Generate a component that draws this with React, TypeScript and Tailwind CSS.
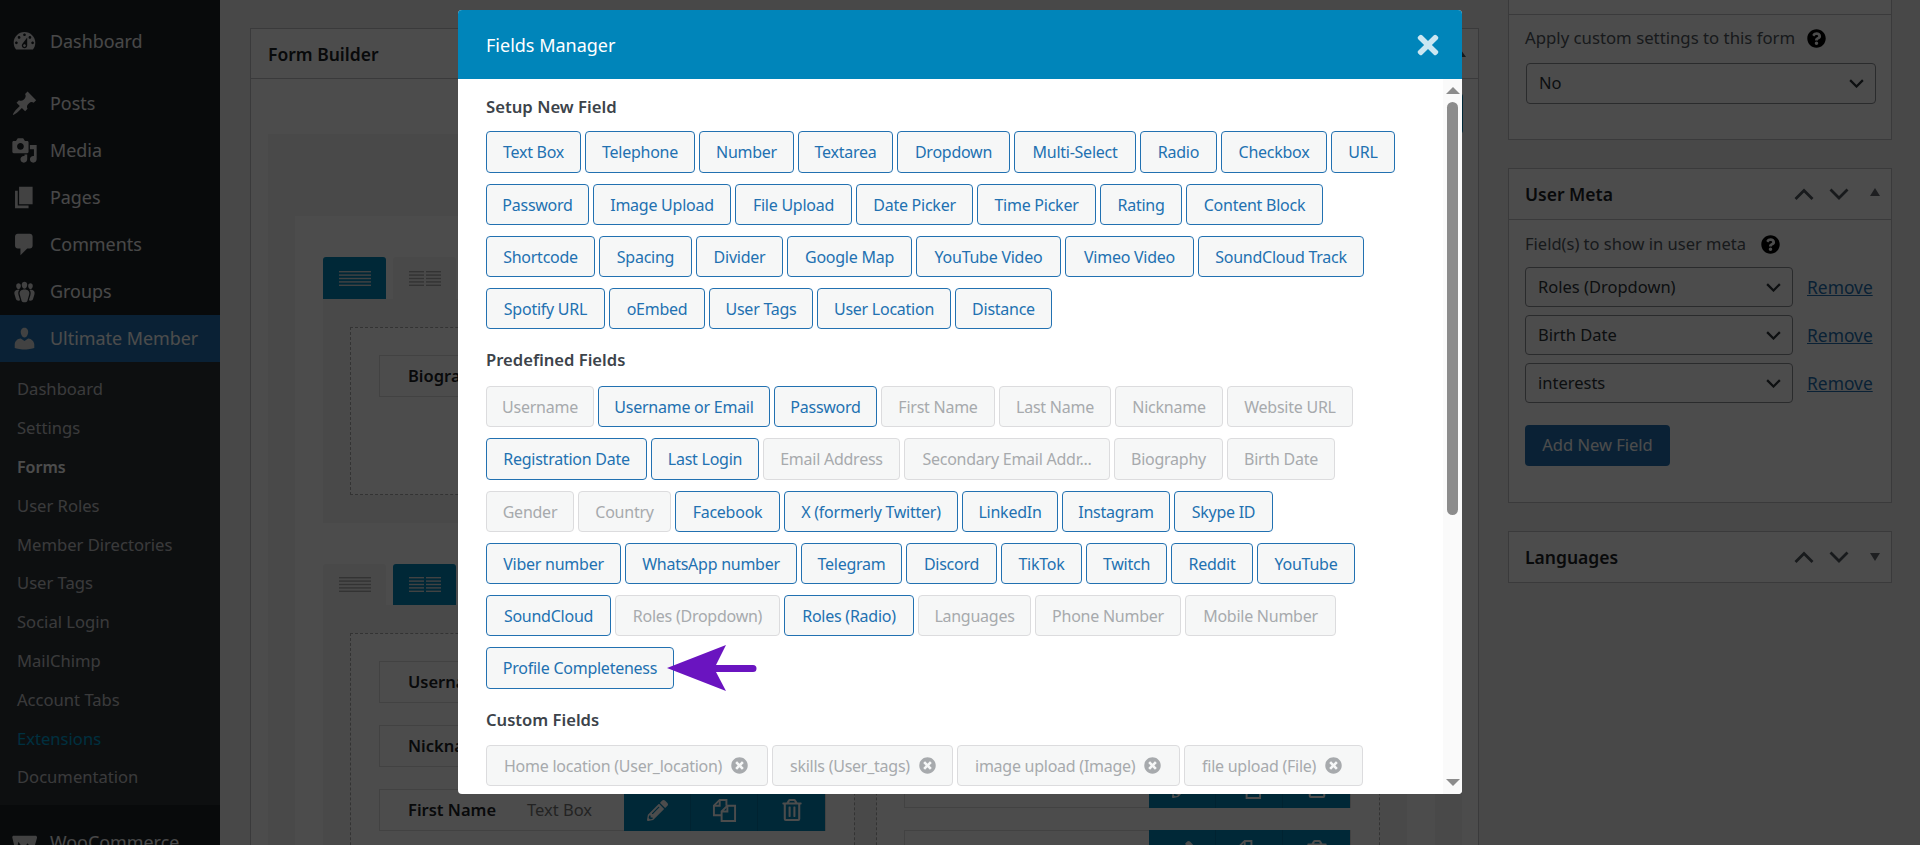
import { FaPencilAlt, FaQuestionCircle, FaRegTrashAlt, FaTimes, FaTimesCircle } from "react-icons/fa";

/* Sidebar icons, dashicons shapes */
const icons = {
  dashboard:
    "M3.76 16h12.48c1.1-1.37 1.76-3.11 1.76-5 0-4.42-3.58-8-8-8s-8 3.58-8 8c0 1.89.66 3.63 1.76 5zM10 4c.55 0 1 .45 1 1s-.45 1-1 1-1-.45-1-1 .45-1 1-1zM6 6c.55 0 1 .45 1 1s-.45 1-1 1-1-.45-1-1 .45-1 1-1zm8 0c.55 0 1 .45 1 1s-.45 1-1 1-1-.45-1-1 .45-1 1-1zm-5.37 5.55L12 7v6c0 1.1-.9 2-2 2s-2-.9-2-2c0-.57.24-1.08.63-1.45zM4 10c.55 0 1 .45 1 1s-.45 1-1 1-1-.45-1-1 .45-1 1-1zm12 0c.55 0 1 .45 1 1s-.45 1-1 1-1-.45-1-1 .45-1 1-1zm-5 3c0-.55-.45-1-1-1s-1 .45-1 1 .45 1 1 1 1-.45 1-1z",
  posts:
    "M10.44 3.02l1.82-1.82 6.36 6.35-1.83 1.82c-1.05-.68-2.48-.57-3.41.36l-.75.75c-.92.93-1.04 2.35-.35 3.41l-1.83 1.82-2.41-2.41-2.8 2.79c-.42.42-3.38 2.71-3.8 2.29s1.86-3.39 2.28-3.81l2.79-2.79L4.1 9.36l1.83-1.82c1.05.69 2.48.57 3.4-.36l.75-.75c.93-.92 1.05-2.35.36-3.41z",
  media:
    "M13 11V4c0-.55-.45-1-1-1h-1.67L9 1H5L3.67 3H2c-.55 0-1 .45-1 1v7c0 .55.45 1 1 1h10c.55 0 1-.45 1-1zM7 4.5c1.38 0 2.5 1.12 2.5 2.5S8.38 9.5 7 9.5 4.5 8.38 4.5 7 5.62 4.5 7 4.5zM14 6h5v10.5c0 1.38-1.12 2.5-2.5 2.5S14 17.88 14 16.5s1.12-2.5 2.5-2.5c.17 0 .34.02.5.05V9h-3V6zm-4 8.05V13h2v3.5c0 1.38-1.12 2.5-2.5 2.5S7 17.88 7 16.5 8.12 14 9.5 14c.17 0 .34.02.5.05z",
  pages: "M6 15V2h10v13H6zm-1 1h8v2H3V5h2v11z",
  comments: "M5 2h9c1.1 0 2 .9 2 2v7c0 1.1-.9 2-2 2h-2l-5 5v-5H5c-1.1 0-2-.9-2-2V4c0-1.1.9-2 2-2z",
  groups:
    "M8.03 4.46c-.29 1.28.55 3.46 1.97 3.46 1.41 0 2.25-2.18 1.96-3.46-.22-.98-1.08-1.63-1.96-1.63-.89 0-1.74.65-1.97 1.63zm-4.13.9c-.25 1.08.47 2.93 1.67 2.93s1.92-1.85 1.67-2.93c-.19-.83-.92-1.39-1.67-1.39s-1.48.56-1.67 1.39zm8.86 0c-.25 1.08.47 2.93 1.66 2.93 1.2 0 1.92-1.85 1.67-2.93-.19-.83-.92-1.39-1.67-1.39-.74 0-1.47.56-1.66 1.39zm-.59 11.43l1.25-4.3C14.2 10 12.71 8.47 10 8.47c-2.72 0-4.21 1.53-3.44 4.02l1.26 4.3C8.05 17.51 9 18 10 18c.98 0 1.94-.49 2.17-1.21zm-6.1-7.63c-.49.67-.96 1.83-.42 3.59l1.12 3.79c-.34.2-.77.31-1.2.31-.85 0-1.65-.41-1.85-1.03l-1.07-3.65c-.65-2.11.61-3.4 2.92-3.4.27 0 .54.02.79.06-.1.1-.2.22-.29.33zm8.35-.39c2.31 0 3.58 1.29 2.92 3.4l-1.07 3.65c-.2.62-1 1.03-1.85 1.03-.43 0-.86-.11-1.2-.31l1.11-3.77c.55-1.78.08-2.94-.42-3.61-.08-.11-.18-.23-.28-.33.25-.04.51-.06.79-.06z",
  user: "M10 9.25c-2.27 0-2.73-3.44-2.73-3.44C7 4.02 7.82 2 9.97 2c2.16 0 2.98 2.02 2.71 3.81 0 0-.41 3.44-2.68 3.44zm0 2.57L12.72 10c2.39 0 4.52 2.33 4.52 4.53v2.49s-3.65 1.13-7.24 1.13c-3.65 0-7.24-1.13-7.24-1.13v-2.49c0-2.25 1.94-4.48 4.47-4.48z",
  woo: "M2 5h16c1 0 1.5.8 1.2 1.8l-2 7c-.3 1-1 1.2-1.7.4L12 10.500l-1.500 3.700c-.4.9-1.100.9-1.600.1L5.500 9.500 4.500 14c-.2.900-1.500.9-1.700 0L1 6.500C.8 5.600 1.200 5 2 5z",
};

function MenuIcon({ d }: { d: string }) {
  return (
    <svg viewBox="0 0 20 20" className="w-[27px] h-[27px] shrink-0 fill-[#dcdcde]">
      <path d={d} />
    </svg>
  );
}

const mainMenu = [
  { label: "Posts", icon: icons.posts },
  { label: "Media", icon: icons.media },
  { label: "Pages", icon: icons.pages },
  { label: "Comments", icon: icons.comments },
  { label: "Groups", icon: icons.groups },
];

const subMenu = [
  "Dashboard",
  "Settings",
  "Forms",
  "User Roles",
  "Member Directories",
  "User Tags",
  "Social Login",
  "MailChimp",
  "Account Tabs",
  "Extensions",
  "Documentation",
];

function Sidebar() {
  return (
    <aside className="w-[220px] shrink-0 h-[845px] overflow-hidden bg-[#1d2327] text-[#f0f0f1] text-[17.9px]">
      <div className="h-[47px] mt-[18px] flex items-center gap-[12px] pl-[11px]">
        <MenuIcon d={icons.dashboard} />
        Dashboard
      </div>
      <div className="mt-[15px]">
        {mainMenu.map((item) => (
          <div key={item.label} className="h-[47px] flex items-center gap-[12px] pl-[11px]">
            <MenuIcon d={item.icon} />
            {item.label}
          </div>
        ))}
      </div>
      <div className="h-[47px] flex items-center gap-[12px] pl-[11px] bg-[#2271b1] text-white">
        <MenuIcon d={icons.user} />
        Ultimate Member
      </div>
      <div className="bg-[#2c3338] pt-[8.5px] h-[443px] text-[#c3c4c7] text-[16.6px]">
        {subMenu.map((label) => (
          <div
            key={label}
            className={
              label === "Forms"
                ? "h-[38.8px] flex items-center pl-[17px] font-semibold text-white text-[16px]"
                : label === "Extensions"
                  ? "h-[38.8px] flex items-center pl-[17px] text-[#00a0d2]"
                  : "h-[38.8px] flex items-center pl-[17px]"
            }
          >
            {label}
          </div>
        ))}
      </div>
      <div className="h-[47px] mt-[14px] flex items-center gap-[12px] pl-[11px]">
        <MenuIcon d={icons.woo} />
        WooCommerce
      </div>
    </aside>
  );
}

function LayoutTab({ active, columns }: { active: boolean; columns: number }) {
  const stroke = active ? "#dddddd" : "#aaaaaa";
  return (
    <div
      className={
        active
          ? "w-[63px] h-full rounded-t-[3px] bg-[#0085ba] flex items-center justify-center"
          : "w-[63px] h-full rounded-t-[3px] bg-[#f5f5f5] flex items-center justify-center"
      }
    >
      <svg width="32" height="15" viewBox="0 0 32 15" fill={stroke}>
        {[0, 3.4, 6.8, 10.2, 13.6].map((y) =>
          columns === 1 ? (
            <rect key={y} x="0" y={y} width="32" height="1.4" />
          ) : (
            <g key={y}>
              <rect x="0" y={y} width="15" height="1.4" />
              <rect x="17" y={y} width="15" height="1.4" />
            </g>
          ),
        )}
      </svg>
    </div>
  );
}

function FieldRow({ name, type }: { name: string; type: string }) {
  return (
    <div className="h-[42px] w-[447px] border border-[#dddddd] flex items-center text-[16.5px]">
      <span className="pl-[28px] pt-px w-[147px] font-semibold text-[#1d2327] whitespace-nowrap">{name}</span>
      <span className="w-[97px] pt-px text-[#777777] whitespace-nowrap">{type}</span>
      <div className="ml-auto flex h-[42px] text-white">
        <span className="w-[67px] bg-[#0085ba] flex items-center justify-center border-r border-[#0077a6]">
          <FaPencilAlt size={21} />
        </span>
        <span className="w-[67px] bg-[#0085ba] flex items-center justify-center border-r border-[#0077a6]">
          <svg viewBox="0 0 26 26" className="w-[25px] h-[25px] fill-none stroke-white stroke-2">
            <path d="M10 18H2V8l6-6h7v6" />
            <path d="M8 2v6H2" />
            <path d="M16 8h8v16H10V14z" />
            <path d="M16 8v6h-6" />
          </svg>
        </span>
        <span className="w-[67px] bg-[#0085ba] flex items-center justify-center">
          <FaRegTrashAlt size={22} />
        </span>
      </div>
    </div>
  );
}

function FormBuilder() {
  return (
    <section className="w-[1229px] shrink-0 mt-[28px] h-[817px] overflow-hidden border-l border-r border-t border-[#c3c4c7] bg-white">
      <header className="h-[50px] border-b border-[#c3c4c7] flex items-center justify-between pl-[17px] pr-[12px]">
        <span className="pt-[2px] text-[17.5px] font-semibold text-[#1d2327]">Form Builder</span>
        <span className="w-0 h-0 border-x-[5px] border-x-transparent border-b-[7px] border-b-[#50575e]" />
      </header>
      <div className="h-[55px] pt-[14px] pr-[15px] flex justify-end">
        <span className="w-[120px] h-[41px] rounded-[4px] bg-[#0085ba]" />
      </div>
      <div className="ml-[17px] mr-[16px] bg-[#f5f5f5] pt-[82px] px-[27px]">
        <div className="bg-white pt-[41px] px-[28px]">
          <div className="flex gap-[7px] h-[42px]">
            <LayoutTab active columns={1} />
            <LayoutTab active={false} columns={2} />
          </div>
          <div className="bg-[#f5f5f5] px-[27px] pt-[28px] pb-[28px]">
            <div className="border border-dashed border-[#aaaaaa] bg-white h-[168px] pl-[28px] pt-[27px]">
              <FieldRow name="Biography" type="Textarea" />
            </div>
          </div>
          <div className="flex gap-[7px] h-[41px] mt-[41px]">
            <LayoutTab active={false} columns={1} />
            <LayoutTab active columns={2} />
          </div>
          <div className="bg-[#f5f5f5] px-[27px] pt-[28px] h-[300px] flex gap-[21px]">
            <div className="flex-1 border border-dashed border-[#aaaaaa] bg-white pl-[28px] pt-[27px] flex flex-col gap-[22px]">
              <FieldRow name="Username" type="Text Box" />
              <FieldRow name="Nickname" type="Text Box" />
              <FieldRow name="First Name" type="Text Box" />
            </div>
            <div className="flex-1 border border-dashed border-[#aaaaaa] bg-white pl-[27px] pt-[4px] flex flex-col gap-[22px]">
              <FieldRow name="Last Name" type="Text Box" />
              <FieldRow name="Gender" type="Radio" />
              <FieldRow name="Birth Date" type="Date Picker" />
              <FieldRow name="Country" type="Dropdown" />
            </div>
          </div>
        </div>
      </div>
    </section>
  );
}

function Chevron({ up, thick }: { up?: boolean; thick?: boolean }) {
  return (
    <svg
      viewBox="0 0 20 12"
      className={thick ? "w-[20px] h-[12px] fill-none stroke-[#50575e] stroke-[2.8]" : "w-[15px] h-[9px] fill-none stroke-[#2c3338] stroke-[3]"}
    >
      <path d={up ? "M1.500 11 10 2.500l8.500 8.500" : "M1.500 1.500 10 10l8.500-8.500"} />
    </svg>
  );
}

function MetaHead({ title, open }: { title: string; open: boolean }) {
  return (
    <div className="h-[50px] flex items-center pl-[16px] text-[17.5px] font-semibold text-[#1d2327]">
      <span className="flex-1">{title}</span>
      <div className="flex items-center gap-[15px] pr-[11px]">
        <Chevron up thick />
        <Chevron thick />
        <span
          className={
            open
              ? "ml-[6px] mb-[5px] w-0 h-0 border-x-[5.5px] border-x-transparent border-b-[8px] border-b-[#646970]"
              : "ml-[6px] mb-[1px] w-0 h-0 border-x-[5.5px] border-x-transparent border-t-[8px] border-t-[#646970]"
          }
        />
      </div>
    </div>
  );
}

function Select({ label, width, height }: { label: string; width: string; height: string }) {
  return (
    <div className={`${width} ${height} border border-[#8c8f94] rounded-[4px] flex items-center justify-between pl-[12px] pr-[11px] text-[16.5px] text-[#2c3338]`}>
      {label}
      <Chevron />
    </div>
  );
}

function MetaRow({ label }: { label: string }) {
  return (
    <div className="flex items-center gap-[14px]">
      <Select label={label} width="w-[268px]" height="h-[40px]" />
      <span className="text-[17.4px] text-[#2271b1] underline">Remove</span>
    </div>
  );
}

function RightColumn() {
  return (
    <div className="w-[384px] shrink-0 ml-[29px] mt-[-36px] flex flex-col gap-[28px] text-[#50575e]">
      <section className="h-[176px] border border-[#c3c4c7] bg-white">
        <div className="h-[50px] border-b border-[#c3c4c7]" />
        <p className="mt-[11px] pl-[16px] flex items-center gap-[12px] text-[16.75px] h-[24px]">
          Apply custom settings to this form
          <FaQuestionCircle size={19} className="text-black" />
        </p>
        <div className="mt-[13px] pl-[17px]">
          <Select label="No" width="w-[350px]" height="h-[41px]" />
        </div>
      </section>
      <section className="h-[335px] border border-[#c3c4c7] bg-white">
        <div className="border-b border-[#c3c4c7]">
          <MetaHead title="User Meta" open />
        </div>
        <p className="mt-[12px] pl-[16px] flex items-center gap-[15px] text-[16.5px] h-[24px]">
          Field(s) to show in user meta
          <FaQuestionCircle size={19} className="text-black" />
        </p>
        <div className="mt-[11px] pl-[16px] flex flex-col gap-[8px]">
          <MetaRow label="Roles (Dropdown)" />
          <MetaRow label="Birth Date" />
          <MetaRow label="interests" />
          <div className="mt-[14px] w-[145px] h-[41px] rounded-[4px] bg-[#2271b1] text-white text-[16.5px] flex items-center justify-center">
            Add New Field
          </div>
        </div>
      </section>
      <section className="border border-[#c3c4c7] bg-white">
        <MetaHead title="Languages" open={false} />
      </section>
    </div>
  );
}

type Field = [string, string, boolean?];

const setupRows: { h: string; items: Field[] }[] = [
  {
    h: "h-[42px]",
    items: [
      ["Text Box", "w-[95px]"],
      ["Telephone", "w-[110px]"],
      ["Number", "w-[95px]"],
      ["Textarea", "w-[95px]"],
      ["Dropdown", "w-[113px]"],
      ["Multi-Select", "w-[122px]"],
      ["Radio", "w-[77px]"],
      ["Checkbox", "w-[106px]"],
      ["URL", "w-[64px]"],
    ],
  },
  {
    h: "h-[41px]",
    items: [
      ["Password", "w-[103px]"],
      ["Image Upload", "w-[138px]"],
      ["File Upload", "w-[117px]"],
      ["Date Picker", "w-[117px]"],
      ["Time Picker", "w-[119px]"],
      ["Rating", "w-[82px]"],
      ["Content Block", "w-[137px]"],
    ],
  },
  {
    h: "h-[41px]",
    items: [
      ["Shortcode", "w-[109px]"],
      ["Spacing", "w-[93px]"],
      ["Divider", "w-[87px]"],
      ["Google Map", "w-[125px]"],
      ["YouTube Video", "w-[145px]"],
      ["Vimeo Video", "w-[129px]"],
      ["SoundCloud Track", "w-[166px]"],
    ],
  },
  {
    h: "h-[41px]",
    items: [
      ["Spotify URL", "w-[119px]"],
      ["oEmbed", "w-[96px]"],
      ["User Tags", "w-[104px]"],
      ["User Location", "w-[134px]"],
      ["Distance", "w-[97px]"],
    ],
  },
];

const predefinedRows: { h: string; items: Field[] }[] = [
  {
    h: "h-[41px]",
    items: [
      ["Username", "w-[108px]", true],
      ["Username or Email", "w-[172px]"],
      ["Password", "w-[103px]"],
      ["First Name", "w-[114px]", true],
      ["Last Name", "w-[112px]", true],
      ["Nickname", "w-[108px]", true],
      ["Website URL", "w-[126px]", true],
    ],
  },
  {
    h: "h-[42px]",
    items: [
      ["Registration Date", "w-[161px]"],
      ["Last Login", "w-[108px]"],
      ["Email Address", "w-[137px]", true],
      ["Secondary Email Addr...", "w-[206px]", true],
      ["Biography", "w-[109px]", true],
      ["Birth Date", "w-[108px]", true],
    ],
  },
  {
    h: "h-[41px]",
    items: [
      ["Gender", "w-[88px]", true],
      ["Country", "w-[93px]", true],
      ["Facebook", "w-[105px]"],
      ["X (formerly Twitter)", "w-[174px]"],
      ["LinkedIn", "w-[96px]"],
      ["Instagram", "w-[108px]"],
      ["Skype ID", "w-[99px]"],
    ],
  },
  {
    h: "h-[41px]",
    items: [
      ["Viber number", "w-[135px]"],
      ["WhatsApp number", "w-[172px]"],
      ["Telegram", "w-[101px]"],
      ["Discord", "w-[91px]"],
      ["TikTok", "w-[81px]"],
      ["Twitch", "w-[81px]"],
      ["Reddit", "w-[82px]"],
      ["YouTube", "w-[98px]"],
    ],
  },
  {
    h: "h-[41px]",
    items: [
      ["SoundCloud", "w-[125px]"],
      ["Roles (Dropdown)", "w-[165px]", true],
      ["Roles (Radio)", "w-[130px]"],
      ["Languages", "w-[113px]", true],
      ["Phone Number", "w-[146px]", true],
      ["Mobile Number", "w-[151px]", true],
    ],
  },
];

const customFields = [
  ["Home location (User_location)", "w-[282px]"],
  ["skills (User_tags)", "w-[181px]"],
  ["image upload (Image)", "w-[223px]"],
  ["file upload (File)", "w-[179px]"],
];

function FieldButton({ label, width, disabled }: { label: string; width: string; disabled?: boolean }) {
  return (
    <span
      className={
        disabled
          ? `${width} shrink-0 h-full flex items-center justify-center whitespace-nowrap rounded-[4px] border border-[#dcdcde] bg-[#f6f7f7] text-[#a7aaad]`
          : `${width} shrink-0 h-full flex items-center justify-center whitespace-nowrap rounded-[4px] border border-[#2271b1] bg-[#f6f7f7] text-[#2271b1]`
      }
    >
      {label}
    </span>
  );
}

function Rows({ rows }: { rows: { h: string; items: Field[] }[] }) {
  return (
    <div className="flex flex-col gap-[11px]">
      {rows.map((row, i) => (
        <div key={i} className={`flex gap-1 ${row.h}`}>
          {row.items.map(([label, width, disabled]) => (
            <FieldButton key={label} label={label} width={width} disabled={disabled} />
          ))}
        </div>
      ))}
    </div>
  );
}

function Modal() {
  return (
    <div className="absolute left-[458px] top-[10px] w-[1004px] h-[784px] rounded-[4px] overflow-hidden bg-white flex flex-col">
      <header className="h-[69px] shrink-0 bg-[#0085ba] flex items-center justify-between pl-[28px] pr-[19px] text-white text-[18px]">
        <span className="pt-[2px]">Fields Manager</span>
        <FaTimes size={30} className="text-[#cbe6f1]" />
      </header>
      <div className="flex flex-1 min-h-0">
        <div className="flex-1 pl-[28px] pt-[16px] text-[16px] tracking-[-0.25px] overflow-hidden">
          <h3 className="h-[24px] mb-[12px] flex items-center font-semibold tracking-normal text-[16.7px] text-[#3c434a]">Setup New Field</h3>
          <Rows rows={setupRows} />
          <h3 className="h-[24px] mt-[19px] mb-[14px] flex items-center font-semibold tracking-normal text-[16.6px] text-[#3c434a]">Predefined Fields</h3>
          <Rows rows={predefinedRows} />
          <div className="relative h-[42px] mt-[11px] flex">
            <FieldButton label="Profile Completeness" width="w-[188px]" />
            <svg viewBox="0 0 90 46" className="absolute left-[181px] top-[-2px] w-[90px] h-[46px]">
              <path d="M0 23 59 0 49 20H86a3.500 3.500 0 0 1 0 7H49l10 19z" fill="#6a14c0" />
            </svg>
          </div>
          <h3 className="h-[24px] mt-[19px] mb-[13px] flex items-center font-semibold tracking-normal text-[16.6px] text-[#3c434a]">Custom Fields</h3>
          <div className="flex gap-1 h-[41px]">
            {customFields.map(([label, width]) => (
              <span
                key={label}
                className={`${width} shrink-0 h-full pl-[17px] flex items-center gap-[9px] whitespace-nowrap rounded-[4px] border border-[#dcdcde] bg-[#f6f7f7] text-[#a7aaad]`}
              >
                {label}
                <FaTimesCircle size={17} />
              </span>
            ))}
          </div>
        </div>
        <div className="w-[19px] shrink-0 bg-[#fafafa] flex flex-col items-center pt-[8px] pb-[8px]">
          <span className="w-0 h-0 border-x-[7px] border-x-transparent border-b-[7px] border-b-[#8c8c8c]" />
          <span className="mt-[8px] w-[11px] h-[413px] rounded-[6px] bg-[#8c8c8c]" />
          <span className="mt-auto w-0 h-0 border-x-[7px] border-x-transparent border-t-[7px] border-t-[#8c8c8c]" />
        </div>
      </div>
    </div>
  );
}

export default function App() {
  return (
    <div className="relative w-[1920px] h-[845px] overflow-hidden bg-[#f0f0f1] font-['Noto_Sans',sans-serif] flex">
      <Sidebar />
      <main className="flex-1 flex pl-[30px]">
        <FormBuilder />
        <RightColumn />
      </main>
      <div className="absolute inset-0 bg-black/70" />
      <Modal />
    </div>
  );
}
